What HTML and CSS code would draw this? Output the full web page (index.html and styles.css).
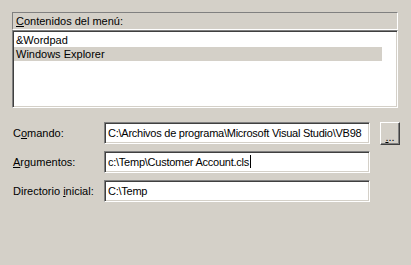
FILE: index.html
```html
<!DOCTYPE html>
<html lang="es">
<head>
  <meta charset="UTF-8" />
  <title>Herramientas externas</title>
  <link rel="stylesheet" href="styles.css">
</head>
<body>
  <div class="menu">
    <div class="menu-title"><u>C</u>ontenidos del menú:</div>
    <div class="menu-list">
      <div class="item">&amp;Wordpad</div>
      <div class="item selected">Windows Explorer</div>
    </div>
  </div>

  <div class="form">
    <div class="row">
      <label>C<u>o</u>mando:</label>
      <div class="field">C:\Archivos de programa\Microsoft Visual Studio\VB98</div>
      <button class="browse"><u>.</u>..</button>
    </div>
    <div class="row">
      <label><u>A</u>rgumentos:</label>
      <div class="field">c:\Temp\Customer Account.cls<span class="caret"></span></div>
    </div>
    <div class="row">
      <label>Directorio <u>i</u>nicial:</label>
      <div class="field">C:\Temp</div>
    </div>
  </div>
</body>
</html>
```

FILE: styles.css
```css
* { box-sizing: border-box; }
body {
  margin: 0;
  background: #d4d0c8;
  font-family: "Liberation Sans", Arial, sans-serif;
  font-size: 11px;
  color: #000;
}
u { text-decoration: underline; text-underline-offset: 1px; }

.menu {
  margin: 12px 13px 0 12px;
}
.menu-title {
  height: 18px;
  line-height: 16px;
  padding-left: 3px;
  border: 1px solid;
  border-color: #808080 #fff #fff #808080;
}
.menu-list {
  height: 78px;
  background: #fff;
  padding: 2px 0 0;
  border: 1px solid;
  border-color: #808080 #fff #fff #808080;
  box-shadow: inset 1px 1px #404040, inset -1px -1px #d4d0c8;
}
.item {
  height: 14px;
  line-height: 14px;
  padding-left: 2px;
  margin: 0 15px 0 1px;
}
.item.selected {
  background: #d4d0c8;
}

.form {
  margin: 14px 0 0 13px;
  display: flex;
  flex-direction: column;
  gap: 7px;
}
.row {
  display: flex;
  align-items: center;
  height: 22px;
}
.row label {
  width: 91px;
}
.field {
  width: 266px;
  height: 22px;
  line-height: 19px;
  padding: 1px 0 0 3px;
  background: #fff;
  letter-spacing: -0.25px;
  white-space: nowrap;
  overflow: hidden;
  border: 1px solid;
  border-color: #808080 #fff #fff #808080;
  box-shadow: inset 1px 1px #404040, inset -1px -1px #d4d0c8;
}
.caret {
  display: inline-block;
  width: 1px;
  height: 13px;
  margin-left: 1px;
  background: #000;
  vertical-align: -2px;
}
.browse {
  margin-left: 10px;
  width: 20px;
  height: 23px;
  padding: 7px 0 0;
  font: inherit;
  background: #d4d0c8;
  border: 1px solid;
  border-color: #fff #404040 #404040 #fff;
  box-shadow: inset -1px -1px #808080;
}
```
